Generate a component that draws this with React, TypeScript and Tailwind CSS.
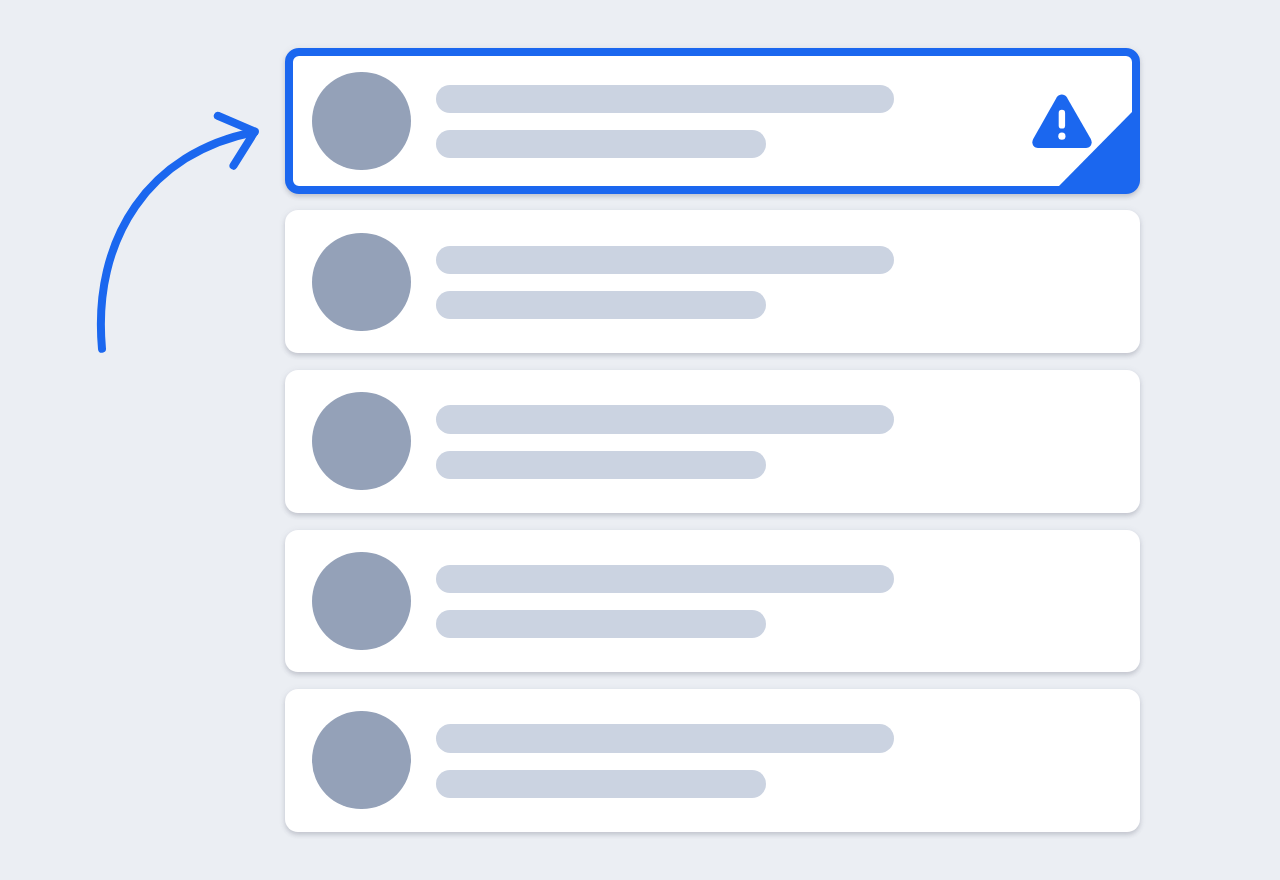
import clsx from "clsx";

function CurvedArrow() {
  return (
    <svg
      className="h-[260px] w-[180px] shrink-0"
      viewBox="90 100 180 260"
      fill="none"
      stroke="#1b67ef"
      strokeWidth="8"
      strokeLinecap="round"
      strokeLinejoin="round"
    >
      <path d="M102 348.8C92 238 150 152 254.5 132" />
      <path d="M217.8 115.8L254.8 131.5L233.5 165.7" />
    </svg>
  );
}

function WarningIcon() {
  return (
    <svg className="h-[54px] w-[60px]" viewBox="0 0 60 54">
      <path
        d="M24.8 3.2C27 -0.4 32.6 -0.4 34.8 3.2L58.8 45C61 49.2 58.7 54 54.1 54H5.9C1.3 54 -1 49.2 1.2 45Z"
        fill="#1b67ef"
      />
      <rect x="26.7" y="15.8" width="6.4" height="18.8" rx="3.2" fill="white" />
      <circle cx="29.9" cy="42.2" r="3.6" fill="white" />
    </svg>
  );
}

function SkeletonCard({ active = false }: { active?: boolean }) {
  return (
    <div
      className={clsx(
        "relative flex items-center gap-[25.3px] bg-white shadow-[0_3px_4px_rgba(60,60,75,0.17),0_1px_7px_rgba(80,90,120,0.1)]",
        active
          ? "h-[145.5px] rounded-[14px] border-8 border-[#1b67ef] pl-[19px]"
          : "h-[142.7px] rounded-[13px] pl-[27px]"
      )}
    >
      {/* Avatar */}
      <div className="h-[98px] w-[98.7px] shrink-0 rounded-full bg-[#94a1b8]" />

      {/* Text lines */}
      <div className="flex flex-col gap-[17px] pt-[1.4px]">
        <div className="h-[28.4px] w-[457.7px] rounded-full bg-[#cbd3e1]" />
        <div className="h-[28.4px] w-[330px] rounded-full bg-[#cbd3e1]" />
      </div>

      {active && (
        <>
          <div className="mr-[40.3px] ml-auto">
            <WarningIcon />
          </div>
          {/* Folded corner, drawn over the border */}
          <svg className="absolute -right-2 -bottom-2 h-[83px] w-[82px]" viewBox="0 0 82 83">
            <path d="M74 1H82V66A16 16 0 0 1 66 82H0V76Z" fill="#1b67ef" />
          </svg>
        </>
      )}
    </div>
  );
}

export default function App() {
  return (
    <main className="flex h-[880px] w-[1280px] items-start overflow-hidden bg-[#ebeef3]">
      <div className="mt-[100px] ml-[90px]">
        <CurvedArrow />
      </div>

      <div className="mt-12 ml-[15.4px] flex w-[854.6px] flex-col gap-[16.9px]">
        <SkeletonCard active />
        <SkeletonCard />
        <SkeletonCard />
        <SkeletonCard />
        <SkeletonCard />
      </div>
    </main>
  );
}
